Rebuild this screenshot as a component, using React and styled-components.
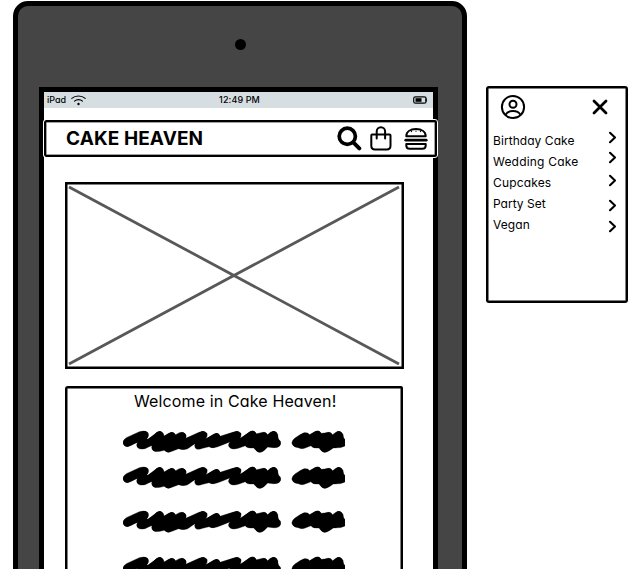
import React from "react";
import styled, { createGlobalStyle } from "styled-components";

const GlobalStyle = createGlobalStyle`
  * { box-sizing: border-box; }
  html, body { margin: 0; height: 569px; overflow: hidden; background: #fff; }
  body {
    color: #000;
    font-family: Inter, "Liberation Sans", sans-serif;
    font-feature-settings: "cv11" 1;
  }
  svg { display: block; flex: none; }
`;

const Page = styled.main`
  display: flex;
  align-items: flex-start;
  gap: 18px;
  width: 644px;
  height: 569px;
  padding: 1px 0 0 13px;
  overflow: hidden;
`;

const Tablet = styled.section`
  width: 454px;
  height: 640px;
  flex: none;
  border: 5px solid #000;
  border-radius: 15px;
  background: #454545;
  display: flex;
  flex-direction: column;
  align-items: flex-start;
`;

const Camera = styled.div`
  width: 11px;
  height: 11px;
  margin: 32.5px 0 37.5px 216.5px;
  border-radius: 50%;
  background: #000;
`;

const Screen = styled.div`
  width: 399px;
  height: 540px;
  margin-left: 21px;
  border: 5px solid #000;
  border-bottom: 0;
  background: #fff;
  display: flex;
  flex-direction: column;
`;

const StatusBar = styled.div`
  display: grid;
  grid-template-columns: 1fr auto 1fr;
  align-items: center;
  height: 16px;
  flex: none;
  padding: 0 6px 0 3px;
  background: #d7dee1;
  font-size: 9px;
  line-height: 16px;
  font-weight: 500;
`;

const Carrier = styled.div`
  display: flex;
  align-items: center;
  gap: 5px;
`;

const Clock = styled.time`
  margin-left: 5px;
  letter-spacing: 0.1px;
`;

const Battery = styled.div`
  justify-self: end;
`;

const Header = styled.header`
  display: flex;
  align-items: center;
  width: 393px;
  height: 37px;
  flex: none;
  margin: 12px 0 25px 0;
  padding: 0 7px 0 19px;
  background: #fff;
  border: 2px solid #000;
  border-radius: 2px;
  box-shadow: inset 0 0 0 0.5px #444;
  outline: 1px solid #fff;
  outline-offset: -0.5px;
`;

const Brand = styled.h1`
  margin: 0;
  padding: 0 0 0 1px;
  flex: 1;
  font-size: 19px;
  line-height: 24px;
  font-weight: 700;
  letter-spacing: 0.1px;
  white-space: nowrap;
`;

const Actions = styled.nav`
  display: flex;
  align-items: center;
`;

const ActionIcon = styled.span`
  display: block;
  margin-left: ${(p) => p.$gap || 0}px;
`;

const Hero = styled.figure`
  width: 339px;
  height: 187px;
  flex: none;
  margin: 0 0 17px 21px;
  border: 2px solid #000;
  box-shadow: inset 0 0 0 0.5px #000;
`;

const Welcome = styled.article`
  width: 338px;
  height: 230px;
  flex: none;
  margin-left: 21px;
  border: 2px solid #000;
  border-radius: 3px 2px 0 0;
  box-shadow: inset 0 0 0 0.5px #000;
  display: flex;
  flex-direction: column;
`;

const WelcomeTitle = styled.h2`
  margin: 2px 0 18px;
  padding-left: 67px;
  font-size: 16px;
  line-height: 22px;
  font-weight: 400;
  letter-spacing: 0.13px;
  white-space: nowrap;
`;

const ScribbleLine = styled.div`
  height: 22px;
  flex: none;
  margin: 0 0 ${(p) => p.$after}px 56px;
`;

const Menu = styled.aside`
  width: 142px;
  height: 217px;
  flex: none;
  margin: 85px 0 0 0.5px;
  border: 2px solid #000;
  border-radius: 3px;
  box-shadow: inset 0 0 0 0.5px #000;
  padding: 0 8.5px 0 5.5px;
`;

const MenuTop = styled.div`
  display: flex;
  justify-content: space-between;
  padding: 6px 9px 0 7px;
  height: 42px;
`;

const CloseIcon = styled.span`
  display: block;
  padding-top: 5px;
`;

const MenuItem = styled.div`
  display: flex;
  justify-content: space-between;
  align-items: flex-start;
  height: 21px;
  font-size: 12px;
  line-height: 21px;
  letter-spacing: ${(p) => p.$tracking}px;
  white-space: nowrap;
`;

const ChevronSlot = styled.span`
  display: block;
  padding-top: ${(p) => p.$top}px;
`;

const WifiIcon = () => (
  <svg width="15" height="11" viewBox="0 0 15 11" fill="none" stroke="#000" strokeWidth="1.1" strokeLinecap="round">
    <path d="M.8 3.4C4.3.1 10.7.1 14.2 3.4M3.5 6.1c2.2-2 5.8-2 8 0" />
    <circle cx="7.5" cy="9" r="1.2" fill="#000" stroke="none" />
  </svg>
);

const BatteryIcon = () => (
  <svg width="14" height="8" viewBox="0 0 14 8">
    <rect x=".7" y=".8" width="12.4" height="6.4" rx="1.8" fill="none" stroke="#000" strokeWidth="1.2" />
    <rect x="2.5" y="2.2" width="6" height="3.6" />
    <path d="M12.4 2.2q1.4.2 1.4 1.8t-1.4 1.8z" />
  </svg>
);

const SearchIcon = () => (
  <svg width="25" height="25" viewBox="0 0 25 25" fill="none" stroke="#000">
    <circle cx="10.3" cy="10.3" r="8.1" strokeWidth="3.7" />
    <path d="m16.3 16.3 6 6" strokeWidth="4" strokeLinecap="round" />
  </svg>
);

const BagIcon = () => (
  <svg width="22" height="25" viewBox="0 0 22 25" fill="none" stroke="#000" strokeWidth="2" strokeLinecap="round">
    <path d="M1.3 9.5q0-.9.9-.9h17.4q.9 0 .9.9v10.2q0 3.7-3.7 3.7H5q-3.7 0-3.7-3.7z" />
    <path d="M6.7 12.5V5.5a4.2 4.2 0 0 1 8.4 0v7" />
  </svg>
);

const BurgerIcon = () => (
  <svg width="24" height="22" viewBox="0 0 24 22" fill="none" stroke="#000" strokeLinejoin="round" strokeLinecap="round">
    <path d="M2.3 8.2C2.3 3.7 6.2 1.1 12 1.1s9.7 2.6 9.7 7.1z" strokeWidth="2" />
    <path d="M7.5 3.5v.1m4.5-.5v.1m4.5.3v.1" strokeWidth="1.3" />
    <path d="M1.8 12.2h20.4" strokeWidth="2.8" />
    <path d="M2.3 16h19.4v1.5q0 3.2-3.2 3.2h-13q-3.2 0-3.2-3.2z" strokeWidth="2" />
  </svg>
);

const AccountIcon = () => (
  <svg width="26" height="26" viewBox="0 0 26 26" fill="none" stroke="#000" strokeWidth="2">
    <circle cx="13" cy="13" r="11.1" />
    <circle cx="13" cy="10.3" r="3.5" />
    <path d="M5.5 20.8C7 18.2 9.8 17 13 17s6 1.2 7.5 3.8" />
  </svg>
);

const CrossIcon = () => (
  <svg width="16" height="16" viewBox="0 0 16 16" fill="none" stroke="#000" strokeWidth="2.8" strokeLinecap="round">
    <path d="m2 2 12 12M14 2 2 14" />
  </svg>
);

const Chevron = () => (
  <svg width="9" height="13" viewBox="0 0 9 13" fill="none" stroke="#000" strokeWidth="2.1" strokeLinecap="round" strokeLinejoin="round">
    <path d="M2 1.8 7 6.5 2 11.2" />
  </svg>
);

const Cross = () => (
  <svg width="335" height="183" viewBox="0 0 335 183" stroke="#585858" strokeWidth="2.8">
    <path d="M2 3 332 180M332 3 2 180" />
  </svg>
);

const Scribble = () => (
  <svg width="222" height="23" viewBox="0 -2 666 69" stroke="#000" strokeLinejoin="round" strokeLinecap="round">
    <path strokeWidth="1" d="M0 37Q-1 27 10 21L49 3Q65-2 74 5Q81 14 71 26L78 28L101 5Q114-1 121 9L123 16L137 8Q151 2 158 12L169 6Q184 2 189 14L188 23L228 5Q244-1 252 8Q255 18 246 27L272 11Q287 4 291 17L329 5Q346-1 354 8Q356 19 347 29L379 4Q393-4 400 9L411 7Q426 1 434 12L442 5Q458-2 464 12L465 24Q477 32 472 43Q467 53 450 51L434 49L423 60Q408 70 397 57L392 52Q370 53 367 45L348 52Q323 60 317 46Q315 40 322 33L296 44Q269 56 258 48L239 53Q215 62 215 44L217 36L203 48Q187 62 167 54L149 61Q134 68 124 59L111 62Q88 66 86 51L87 44L66 54Q43 59 41 44Q41 39 44 34L25 44Q4 54 0 37Z" />
    <path
      fill="none"
      strokeWidth="23"
      d="M13 36 63 13 54 42 80 35 110 13 99 50 146 16 136 54 178 17 160 42 203 34 239 13 228 42 252 35 280 19 270 40 341 13 330 42 355 34 388 12 384 40 423 17 410 54 452 13 458 38"
    />
    <path strokeWidth="1" d="M507 37Q506 29 516 22L533 11Q551 3 557 9L560 12L574 4Q588-4 595 8L605 7Q622 1 629 12L637 6Q653-2 660 11L662 23L668 27V45Q655 53 631 52L619 60Q603 70 592 57L588 52Q568 53 564 45L552 50Q538 58 526 51Q509 50 507 37Z" />
    <path fill="none" strokeWidth="23" d="M520 37 545 18 536 40 583 12 578 40 617 17 605 54 647 13 654 38" />
  </svg>
);

const categories = [
  { name: "Birthday Cake", tracking: 0.06, top: 1 },
  { name: "Wedding Cake", tracking: 0.2, top: 0 },
  { name: "Cupcakes", tracking: 0.15, top: 2 },
  { name: "Party Set", tracking: 0, top: 6 },
  { name: "Vegan", tracking: 0.1, top: 6 },
];

export default function App() {
  return (
    <>
      <GlobalStyle />
      <Page>
        <Tablet>
          <Camera />
          <Screen>
            <StatusBar>
              <Carrier>iPad <WifiIcon /></Carrier>
              <Clock>12:49 PM</Clock>
              <Battery><BatteryIcon /></Battery>
            </StatusBar>
            <Header>
              <Brand>CAKE HEAVEN</Brand>
              <Actions>
                <ActionIcon><SearchIcon /></ActionIcon>
                <ActionIcon $gap={8}><BagIcon /></ActionIcon>
                <ActionIcon $gap={12}><BurgerIcon /></ActionIcon>
              </Actions>
            </Header>
            <Hero><Cross /></Hero>
            <Welcome>
              <WelcomeTitle>Welcome in Cake Heaven!</WelcomeTitle>
              {[14, 22, 24, 0].map((after, i) => (
                <ScribbleLine key={i} $after={after}><Scribble /></ScribbleLine>
              ))}
            </Welcome>
          </Screen>
        </Tablet>
        <Menu>
          <MenuTop>
            <AccountIcon />
            <CloseIcon><CrossIcon /></CloseIcon>
          </MenuTop>
          {categories.map((c) => (
            <MenuItem key={c.name} $tracking={c.tracking}>
              <span>{c.name}</span>
              <ChevronSlot $top={c.top}><Chevron /></ChevronSlot>
            </MenuItem>
          ))}
        </Menu>
      </Page>
    </>
  );
}
